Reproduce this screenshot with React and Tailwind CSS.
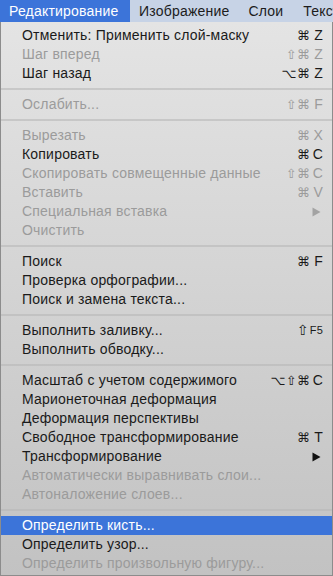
import React from "react";

const Tri = () => (
  <svg width="9" height="10" viewBox="0 0 9 10" className="block">
    <path d="M0.5 0.5 L8.5 5 L0.5 9.5 Z" fill="currentColor" />
  </svg>
);

const items = [
  { t: "Отменить: Применить слой-маску", s: "⌘Z" },
  { t: "Шаг вперед", s: "⇧⌘Z", d: true },
  { t: "Шаг назад", s: "⌥⌘Z" },
  "sep",
  { t: "Ослабить...", s: "⇧⌘F", d: true },
  "sep",
  { t: "Вырезать", s: "⌘X", d: true },
  { t: "Копировать", s: "⌘C" },
  { t: "Скопировать совмещенные данные", s: "⇧⌘C", d: true },
  { t: "Вставить", s: "⌘V", d: true },
  { t: "Специальная вставка", sub: true, d: true },
  { t: "Очистить", d: true },
  "sep",
  { t: "Поиск", s: "⌘F" },
  { t: "Проверка орфографии..." },
  { t: "Поиск и замена текста..." },
  "sep",
  { t: "Выполнить заливку...", f5: true },
  { t: "Выполнить обводку..." },
  "sep",
  { t: "Масштаб с учетом содержимого", s: "⌥⇧⌘C" },
  { t: "Марионеточная деформация" },
  { t: "Деформация перспективы" },
  { t: "Свободное трансформирование", s: "⌘T" },
  { t: "Трансформирование", sub: true },
  { t: "Автоматически выравнивать слои...", d: true },
  { t: "Автоналожение слоев...", d: true },
  "sep",
  { t: "Определить кисть...", h: true },
  { t: "Определить узор..." },
  { t: "Определить произвольную фигуру...", d: true },
];

function Shortcut({ s }) {
  const mods = s.slice(0, -1);
  const key = s.slice(-1);
  return (
    <span className="flex items-center">
      <span className="text-[13px]">{mods}</span>
      <span className="w-[13px] text-right">{key}</span>
    </span>
  );
}

export default function App() {
  return (
    <div
      className="w-[333px] h-[576px] overflow-hidden flex flex-col bg-[#c4c4c4]"
      style={{ fontFamily: '"Liberation Sans", "DejaVu Sans", sans-serif' }}
    >
      <div className="h-[22px] shrink-0 bg-[#c7d3e6] flex items-center text-[14px] tracking-[0.2px] text-[#1c1c1c] whitespace-nowrap overflow-hidden">
        <div className="h-full shrink-0 bg-[#3c74d9] text-white pl-[9px] w-[130px] flex items-center">Редактирование</div>
        <div className="shrink-0 ml-[9px]">Изображение</div>
        <div className="shrink-0 ml-[19px]">Слои</div>
        <div className="shrink-0 ml-[20px]">Текст</div>
      </div>
      <div className="flex-1 flex flex-col border-l border-r border-b border-[#8c8c8c] bg-gradient-to-b from-[#e4e4e4] to-[#c2c2c2] pt-[4px]">
        {items.map((it, i) =>
          it === "sep" ? (
            <div key={i} className="h-[12px] flex items-center">
              <div className="h-[2px] w-full bg-[#b8b8b8]/60" />
            </div>
          ) : (
            <div
              key={i}
              className={
                "h-[19px] flex items-center justify-between pl-[21px] pr-[9px] text-[14px] tracking-[0.2px] whitespace-nowrap " +
                (it.h
                  ? "bg-[#3c74d9] text-white"
                  : it.d
                  ? "text-[#9b9b9b]"
                  : "text-[#1a1a1a]")
              }
            >
              <span>{it.t}</span>
              {it.s && <Shortcut s={it.s} />}
              {it.sub && (
                <span className={"mr-[2px] " + (it.d ? "text-[#a3a3a3]" : "text-[#111]")}>
                  <Tri />
                </span>
              )}
              {it.f5 && (
                <span className="flex items-center">
                  <span>⇧</span>
                  <span className="text-[11px] ml-[1px]">F5</span>
                </span>
              )}
            </div>
          )
        )}
      </div>
    </div>
  );
}
